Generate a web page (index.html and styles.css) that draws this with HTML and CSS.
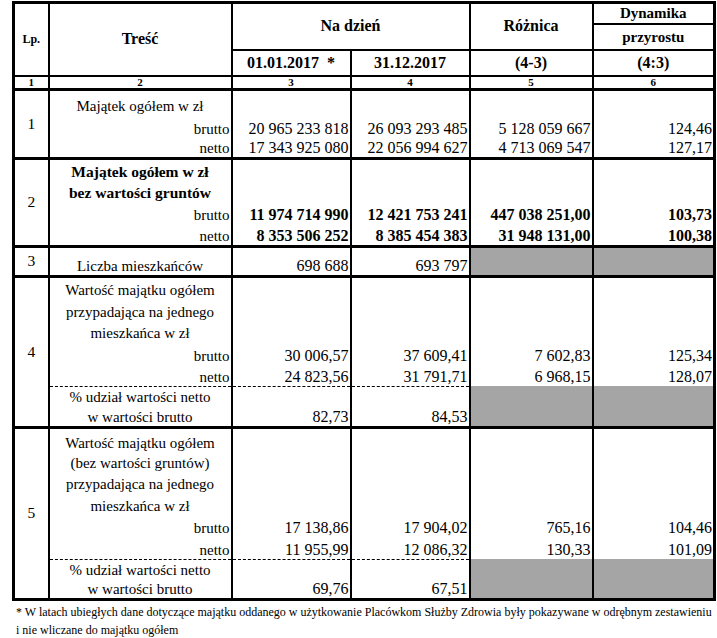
FILE: index.html
```html
<!DOCTYPE html>
<html lang="pl">
<head>
<meta charset="utf-8">
<title>Majątek</title>
<link rel="stylesheet" href="styles.css">
</head>
<body>
<table class="tbl">
  <colgroup>
    <col class="c1"><col class="c2"><col class="c3"><col class="c4"><col class="c5"><col class="c6">
  </colgroup>
  <thead>
    <tr class="hr1">
      <th rowspan="3" class="lph">Lp.</th>
      <th rowspan="3">Treść</th>
      <th colspan="2" rowspan="2">Na dzień</th>
      <th rowspan="2">Różnica</th>
      <th class="sm">Dynamika</th>
    </tr>
    <tr class="hr2">
      <th class="sm">przyrostu</th>
    </tr>
    <tr class="hr3">
      <th>01.01.2017&nbsp; *</th>
      <th>31.12.2017</th>
      <th>(4-3)</th>
      <th>(4:3)</th>
    </tr>
    <tr class="hr4">
      <th class="nr">1</th><th class="nr">2</th><th class="nr">3</th><th class="nr">4</th><th class="nr">5</th><th class="nr">6</th>
    </tr>
  </thead>
  <tbody>
    <tr class="g h26">
      <td rowspan="3" class="lp">1</td>
      <td class="lab">Majątek ogółem w zł</td>
      <td></td><td></td><td></td><td></td>
    </tr>
    <tr class="h23">
      <td class="sub">brutto</td>
      <td class="num">20 965 233 818</td><td class="num">26 093 293 485</td><td class="num">5 128 059 667</td><td class="num">124,46</td>
    </tr>
    <tr class="h20">
      <td class="sub">netto</td>
      <td class="num">17 343 925 080</td><td class="num">22 056 994 627</td><td class="num">4 713 069 547</td><td class="num">127,17</td>
    </tr>
    <tr class="g h23">
      <td rowspan="4" class="lp">2</td>
      <td class="lab b">Majątek ogółem w zł</td>
      <td rowspan="2"></td><td rowspan="2"></td><td rowspan="2"></td><td rowspan="2"></td>
    </tr>
    <tr class="h21">
      <td class="lab b">bez wartości gruntów</td>
    </tr>
    <tr class="h22">
      <td class="sub">brutto</td>
      <td class="num b">11 974 714 990</td><td class="num b">12 421 753 241</td><td class="num b">447 038 251,00</td><td class="num b">103,73</td>
    </tr>
    <tr class="h22">
      <td class="sub">netto</td>
      <td class="num b">8 353 506 252</td><td class="num b">8 385 454 383</td><td class="num b">31 948 131,00</td><td class="num b">100,38</td>
    </tr>
    <tr class="g h30">
      <td class="lp">3</td>
      <td class="lab">Liczba mieszkańców</td>
      <td class="num">698 688</td><td class="num">693 797</td>
      <td class="hatch"></td><td class="hatch"></td>
    </tr>
    <tr class="g h23">
      <td rowspan="7" class="lp">4</td>
      <td class="lab">Wartość majątku ogółem</td>
      <td rowspan="3"></td><td rowspan="3"></td><td rowspan="3"></td><td rowspan="3"></td>
    </tr>
    <tr class="h22"><td class="lab">przypadająca na jednego</td></tr>
    <tr class="h21"><td class="lab">mieszkańca w zł</td></tr>
    <tr class="h23">
      <td class="sub">brutto</td>
      <td class="num">30 006,57</td><td class="num">37 609,41</td><td class="num">7 602,83</td><td class="num">125,34</td>
    </tr>
    <tr class="h21">
      <td class="sub">netto</td>
      <td class="num">24 823,56</td><td class="num">31 791,71</td><td class="num">6 968,15</td><td class="num">128,07</td>
    </tr>
    <tr class="dash h20">
      <td class="lab">% udział wartości netto</td>
      <td rowspan="2" class="num">82,73</td><td rowspan="2" class="num">84,53</td>
      <td rowspan="2" class="hatch"></td><td rowspan="2" class="hatch"></td>
    </tr>
    <tr class="h21"><td class="lab">w wartości brutto</td></tr>
    <tr class="g h25">
      <td rowspan="8" class="lp">5</td>
      <td class="lab">Wartość majątku ogółem</td>
      <td rowspan="4"></td><td rowspan="4"></td><td rowspan="4"></td><td rowspan="4"></td>
    </tr>
    <tr class="h20"><td class="lab">(bez wartości gruntów)</td></tr>
    <tr class="h21"><td class="lab">przypadająca na jednego</td></tr>
    <tr class="h22"><td class="lab">mieszkańca w zł</td></tr>
    <tr class="h22">
      <td class="sub">brutto</td>
      <td class="num">17 138,86</td><td class="num">17 904,02</td><td class="num">765,16</td><td class="num">104,46</td>
    </tr>
    <tr class="h22">
      <td class="sub">netto</td>
      <td class="num">11 955,99</td><td class="num">12 086,32</td><td class="num">130,33</td><td class="num">101,09</td>
    </tr>
    <tr class="dash h20">
      <td class="lab">% udział wartości netto</td>
      <td rowspan="2" class="num">69,76</td><td rowspan="2" class="num">67,51</td>
      <td rowspan="2" class="hatch"></td><td rowspan="2" class="hatch"></td>
    </tr>
    <tr class="h20"><td class="lab">w wartości brutto</td></tr>
  </tbody>
</table>
<p class="note">* W latach ubiegłych dane dotyczące majątku oddanego w użytkowanie Placówkom Służby Zdrowia były pokazywane w odrębnym zestawieniu<br>i nie wliczane do majątku ogółem</p>
</body>
</html>
```

FILE: styles.css
```css
html, body {
  margin: 0;
  background: #fff;
}
body {
  padding: 1px 0 0 12px;
  font-family: "Liberation Serif", "Times New Roman", serif;
  color: #000;
}
.tbl {
  border-collapse: collapse;
  table-layout: fixed;
  width: 701px;
  border: 3px solid #000;
  font-family: inherit;
  font-size: 15px;
}
.c1 { width: 35px; }
.c2 { width: 183px; }
.c3 { width: 119px; }
.c4 { width: 119px; }
.c5 { width: 123px; }
.c6 { width: 122px; }

.tbl th,
.tbl td {
  padding: 0 1px;
  border-left: 2px solid #000;
  border-right: 2px solid #000;
  line-height: 18px;
  white-space: nowrap;
  font-family: inherit;
  vertical-align: bottom;
}
.tbl th {
  border: 2px solid #000;
  font-weight: bold;
  font-size: 16px;
  text-align: center;
  vertical-align: middle;
}
.tbl th.lph { font-size: 12px; }
.tbl th.sm { font-size: 15px; }
.tbl th.nr { font-size: 11px; line-height: 11px; }

.hr1 { height: 21px; }
.hr2 { height: 26px; }
.hr3 { height: 26px; }
.hr4 { height: 13px; }

.g > td { border-top: 3px solid #000; }
.h20 { height: 20px; }
.h21 { height: 21px; }
.h22 { height: 22px; }
.h23 { height: 23px; }
.h25 { height: 25px; }
.h26 { height: 26px; }
.h30 { height: 30px; }

.tbl td.lp { text-align: center; vertical-align: middle; font-size: 15.5px; }
.lab { text-align: center; }
.sub { text-align: right; }
.num { text-align: right; font-size: 16px; }
.lab.b { font-weight: bold; font-size: 15.5px; }
.num.b { font-weight: bold; }

.dash > td.lab,
.dash > td.num { border-top: 1px dashed #000; }

.hatch {
  background-color: #a4a4a4;
  background-image: repeating-conic-gradient(#777 0 25%, #d2d2d2 0 50%);
  background-size: 2px 2px;
  background-attachment: fixed;
}

.note {
  margin: 2px 0 0 4px;
  font-size: 12px;
  line-height: 18px;
  white-space: nowrap;
}
```
